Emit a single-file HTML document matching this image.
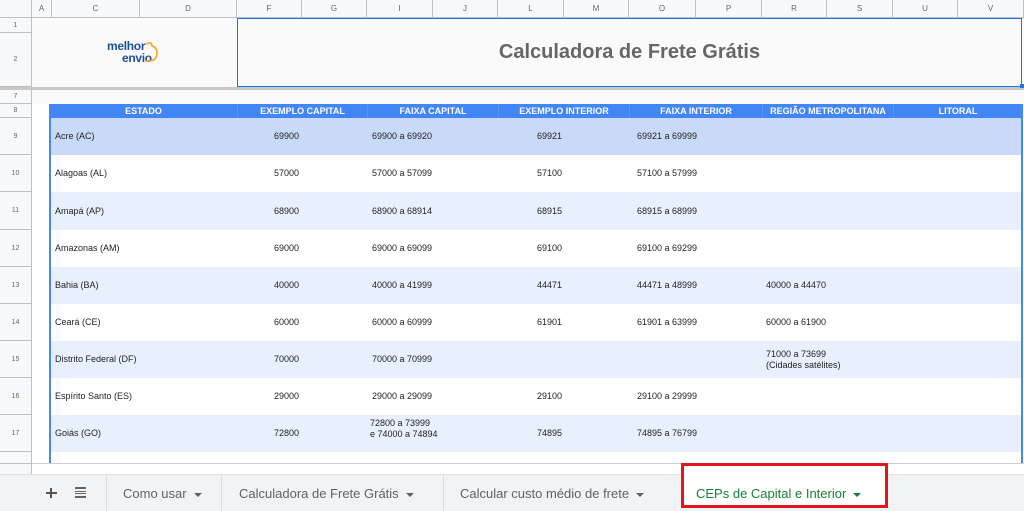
<!DOCTYPE html>
<html><head><meta charset="utf-8"><style>
*{margin:0;padding:0;box-sizing:border-box}
body{width:1024px;height:511px;overflow:hidden;background:#fff;font-family:"Liberation Sans",Arial,sans-serif;position:relative}
.a{position:absolute}
.ch{top:0;height:18px;background:#f8f9fa;border-right:1px solid #c0c0c0;border-bottom:1px solid #c0c0c0;font-size:8px;color:#666;text-align:center;line-height:18px}
.rh{left:0;width:32px;background:#f8f9fa;border-bottom:1px solid #c0c0c0;border-right:1px solid #c0c0c0;font-size:7px;color:#666;text-align:center}
.hd{top:104px;height:14px;background:#4285f4;color:#fff;font-weight:bold;font-size:9px;text-align:center;line-height:14px}
.row{left:50px;width:972px}
.t{font-size:9px;color:#222;position:absolute;line-height:11px}
.ar{display:inline-block;width:0;height:0;border-left:4px solid transparent;border-right:4px solid transparent;border-top:4px solid currentColor;margin-left:7px;vertical-align:middle}
</style></head><body>
<div class="a ch" style="left:0;width:32px;background:#f8f9fa"></div>
<div class="a ch" style="left:32px;width:20px">A</div>
<div class="a ch" style="left:52px;width:88px">C</div>
<div class="a ch" style="left:140px;width:97px">D</div>
<div class="a ch" style="left:237px;width:65px">F</div>
<div class="a ch" style="left:302px;width:65px">G</div>
<div class="a ch" style="left:367px;width:66px">I</div>
<div class="a ch" style="left:433px;width:65px">J</div>
<div class="a ch" style="left:498px;width:66px">L</div>
<div class="a ch" style="left:564px;width:65px">M</div>
<div class="a ch" style="left:629px;width:67px">O</div>
<div class="a ch" style="left:696px;width:66px">P</div>
<div class="a ch" style="left:762px;width:65px">R</div>
<div class="a ch" style="left:827px;width:66px">S</div>
<div class="a ch" style="left:893px;width:65px">U</div>
<div class="a ch" style="left:958px;width:66px">V</div>
<div class="a rh" style="top:18px;height:15px;line-height:15px">1</div>
<div class="a rh" style="top:33px;height:54px;line-height:54px">2</div>
<div class="a" style="left:0;top:87px;width:1024px;height:3px;background:#c8c8c8"></div>
<div class="a rh" style="top:90px;height:14px;line-height:14px">7</div>
<div class="a rh" style="top:104px;height:14px;line-height:14px">8</div>
<div class="a rh" style="top:118px;height:37px;line-height:37px">9</div>
<div class="a rh" style="top:155px;height:37px;line-height:37px">10</div>
<div class="a rh" style="top:192px;height:38px;line-height:38px">11</div>
<div class="a rh" style="top:230px;height:37px;line-height:37px">12</div>
<div class="a rh" style="top:267px;height:37px;line-height:37px">13</div>
<div class="a rh" style="top:304px;height:37px;line-height:37px">14</div>
<div class="a rh" style="top:341px;height:37px;line-height:37px">15</div>
<div class="a rh" style="top:378px;height:37px;line-height:37px">16</div>
<div class="a rh" style="top:415px;height:37px;line-height:37px">17</div>
<div class="a rh" style="top:452px;height:12px"></div>
<div class="a rh" style="top:464px;height:10px;border-bottom:none"></div>
<div class="a" style="left:32px;top:18px;width:992px;height:69px;background:#fafafa"></div>
<div class="a" style="left:32px;top:90px;width:992px;height:14px;background:#fafafa"></div>
<!-- logo -->
<div class="a" style="left:107px;top:40px;font-size:12px;font-weight:bold;color:#1d4f9c;line-height:12px;letter-spacing:-0.3px">melhor</div>
<div class="a" style="left:122px;top:52px;font-size:12px;font-weight:bold;color:#1d4f9c;line-height:12px;letter-spacing:-0.3px">envio</div>
<svg class="a" style="left:144px;top:41px" width="16" height="24" viewBox="0 0 16 24"><path d="M2 3 Q8 0 8 5 Q13 6 13 12 Q13 20 4 20 L1 20" fill="none" stroke="#f5a623" stroke-width="1.6"/></svg>
<div class="a" style="left:237px;top:18px;width:785px;height:69px;border:1px solid #1a73e8;background:#fafafa;text-align:center;line-height:67px;font-size:20px;font-weight:bold;color:#666">Calculadora de Frete Grátis</div>
<div class="a" style="left:1020px;top:84px;width:4px;height:4px;background:#1a73e8"></div>
<div class="a hd" style="left:50px;width:187px">ESTADO</div>
<div class="a hd" style="left:237px;width:130px;border-left:1px solid #5a95f5">EXEMPLO CAPITAL</div>
<div class="a hd" style="left:367px;width:131px;border-left:1px solid #5a95f5">FAIXA CAPITAL</div>
<div class="a hd" style="left:498px;width:131px;border-left:1px solid #5a95f5">EXEMPLO INTERIOR</div>
<div class="a hd" style="left:629px;width:133px;border-left:1px solid #5a95f5">FAIXA INTERIOR</div>
<div class="a hd" style="left:762px;width:131px;border-left:1px solid #5a95f5">REGIÃO METROPOLITANA</div>
<div class="a hd" style="left:893px;width:129px;border-left:1px solid #5a95f5">LITORAL</div>
<div class="a row" style="top:118px;height:37px;background:#c9daf8"></div>
<div class="a row" style="top:155px;height:37px;background:#fff"></div>
<div class="a row" style="top:192px;height:38px;background:#e8f0fe"></div>
<div class="a row" style="top:230px;height:37px;background:#fff"></div>
<div class="a row" style="top:267px;height:37px;background:#e8f0fe"></div>
<div class="a row" style="top:304px;height:37px;background:#fff"></div>
<div class="a row" style="top:341px;height:37px;background:#e8f0fe"></div>
<div class="a row" style="top:378px;height:37px;background:#fff"></div>
<div class="a row" style="top:415px;height:37px;background:#e8f0fe"></div>
<div class="a row" style="top:452px;height:12px;background:#fff"></div>
<div class="a" style="left:49px;top:104px;width:2px;height:360px;background:#4a86f0"></div>
<div class="a" style="left:1021px;top:104px;width:2px;height:360px;background:#4a86f0"></div>
<div class="a" style="left:32px;top:463px;width:992px;height:1px;background:#d0d0d0"></div>

<div class="t" style="left:55px;top:131px">Acre (AC)</div><div class="t" style="left:274px;top:131px">69900</div><div class="t" style="left:372px;top:131px">69900 a 69920</div><div class="t" style="left:537px;top:131px">69921</div><div class="t" style="left:637px;top:131px">69921 a 69999</div>
<div class="t" style="left:55px;top:168px">Alagoas (AL)</div><div class="t" style="left:274px;top:168px">57000</div><div class="t" style="left:372px;top:168px">57000 a 57099</div><div class="t" style="left:537px;top:168px">57100</div><div class="t" style="left:637px;top:168px">57100 a 57999</div>
<div class="t" style="left:55px;top:206px">Amapá (AP)</div><div class="t" style="left:274px;top:206px">68900</div><div class="t" style="left:372px;top:206px">68900 a 68914</div><div class="t" style="left:537px;top:206px">68915</div><div class="t" style="left:637px;top:206px">68915 a 68999</div>
<div class="t" style="left:55px;top:243px">Amazonas (AM)</div><div class="t" style="left:274px;top:243px">69000</div><div class="t" style="left:372px;top:243px">69000 a 69099</div><div class="t" style="left:537px;top:243px">69100</div><div class="t" style="left:637px;top:243px">69100 a 69299</div>
<div class="t" style="left:55px;top:280px">Bahia (BA)</div><div class="t" style="left:274px;top:280px">40000</div><div class="t" style="left:372px;top:280px">40000 a 41999</div><div class="t" style="left:537px;top:280px">44471</div><div class="t" style="left:637px;top:280px">44471 a 48999</div><div class="t" style="left:766px;top:280px">40000 a 44470</div>
<div class="t" style="left:55px;top:317px">Ceará (CE)</div><div class="t" style="left:274px;top:317px">60000</div><div class="t" style="left:372px;top:317px">60000 a 60999</div><div class="t" style="left:537px;top:317px">61901</div><div class="t" style="left:637px;top:317px">61901 a 63999</div><div class="t" style="left:766px;top:317px">60000 a 61900</div>
<div class="t" style="left:55px;top:354px">Distrito Federal (DF)</div><div class="t" style="left:274px;top:354px">70000</div><div class="t" style="left:372px;top:354px">70000 a 70999</div><div class="t" style="left:766px;top:349px">71000 a 73699<br>(Cidades satélites)</div>
<div class="t" style="left:55px;top:391px">Espírito Santo (ES)</div><div class="t" style="left:274px;top:391px">29000</div><div class="t" style="left:372px;top:391px">29000 a 29099</div><div class="t" style="left:537px;top:391px">29100</div><div class="t" style="left:637px;top:391px">29100 a 29999</div>
<div class="t" style="left:55px;top:428px">Goiás (GO)</div><div class="t" style="left:274px;top:428px">72800</div><div class="t" style="left:370px;top:418px">72800 a 73999<br>e 74000 a 74894</div><div class="t" style="left:537px;top:428px">74895</div><div class="t" style="left:637px;top:428px">74895 a 76799</div>

<div class="a" style="left:0;top:474px;width:1024px;height:37px;background:#f1f3f4;border-top:1px solid #e0e0e0"></div>
<div class="a" style="left:46px;top:484px;width:11px;height:2px;background:#555;top:492px"></div>
<div class="a" style="left:50px;top:488px;width:2px;height:10px;background:#555"></div>
<div class="a" style="left:75px;top:487px;width:11px;height:11px;border-top:2px solid #666;border-bottom:2px solid #666"></div>
<div class="a" style="left:75px;top:491px;width:11px;height:3px;border-top:1px solid #666;border-bottom:1px solid #666"></div>
<div class="a" style="left:106px;top:475px;width:1px;height:36px;background:#dadce0"></div>
<div class="a" style="left:123px;top:486px;font-size:13px;color:#5f6368">Como usar<span class="ar"></span></div>
<div class="a" style="left:221px;top:475px;width:1px;height:36px;background:#dadce0"></div>
<div class="a" style="left:239px;top:486px;font-size:13px;color:#5f6368">Calculadora de Frete Grátis<span class="ar"></span></div>
<div class="a" style="left:443px;top:475px;width:1px;height:36px;background:#dadce0"></div>
<div class="a" style="left:460px;top:486px;font-size:13px;color:#5f6368">Calcular custo médio de frete<span class="ar"></span></div>
<div class="a" style="left:681px;top:463px;width:207px;height:45px;border:3px solid #e3141b;background:#fff"></div>
<div class="a" style="left:696px;top:486px;font-size:13px;color:#188038">CEPs de Capital e Interior<span class="ar"></span></div>
</body></html>
